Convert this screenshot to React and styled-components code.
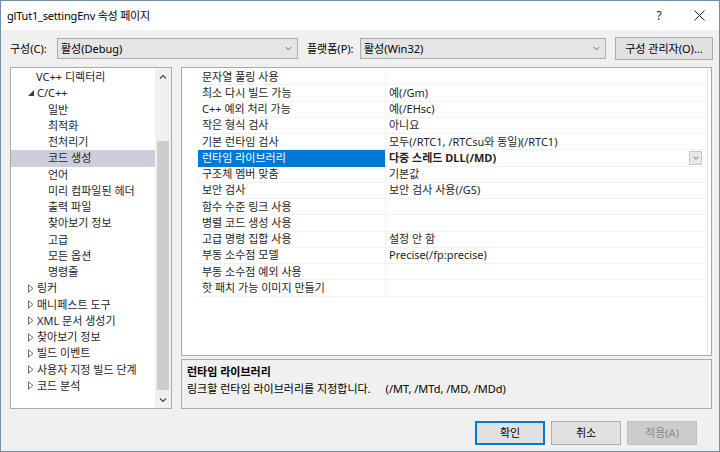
import React from "react";
import styled, { createGlobalStyle, css } from "styled-components";

const Global = createGlobalStyle`
  html, body { margin: 0; padding: 0; background: #ffffff; }
  body { font-family: "Noto Sans", "Noto Sans CJK KR", sans-serif; font-size: 11px; color: #1e1e1e; }
  * { box-sizing: border-box; }
`;

const FONT = `"Noto Sans", "Noto Sans CJK KR", sans-serif`;

const Window = styled.div`
  width: 720px;
  height: 452px;
  border: 1px solid #6f8fb0;
  background: #f0f0f0;
  display: flex;
  flex-direction: column;
  overflow: hidden;
  font-family: ${FONT};
  font-size: 11px;
`;

const TitleBar = styled.div`
  height: 29px;
  flex: none;
  background: #ffffff;
  display: flex;
  align-items: center;
  padding-left: 6px;
`;

const Title = styled.div`
  flex: 1;
  color: #000;
  line-height: 16px;
  font-size: 11px;
  letter-spacing: -0.2px;
`;

const TitleButton = styled.div`
  width: 40px;
  height: 29px;
  display: flex;
  align-items: center;
  justify-content: center;
  color: #222;
  font-size: 12px;
`;

const ConfigBar = styled.div`
  height: 37px;
  flex: none;
  display: flex;
  align-items: center;
  padding: 0 0 0 9px;
`;

const Label = styled.div`
  line-height: 16px;
  color: #000;
  width: ${(p) => p.$w}px;
  flex: none;
`;

const Combo = styled.div`
  width: ${(p) => p.$w}px;
  height: 21px;
  background: #e5e5e5;
  border: 1px solid #acacac;
  display: flex;
  align-items: center;
  padding: 0 4px 0 3px;
  margin-right: ${(p) => p.$mr || 0}px;
  color: #000;
`;

const ComboText = styled.div`
  flex: 1;
  line-height: 16px;
`;

const Button = styled.div`
  width: ${(p) => p.$w || 70}px;
  height: ${(p) => p.$h || 24}px;
  display: flex;
  align-items: center;
  justify-content: center;
  background: #e1e1e1;
  border: 1px solid #adadad;
  color: #000;
  line-height: 16px;
  ${(p) =>
    p.$default &&
    css`
      border-color: #0078d7;
      box-shadow: inset 0 0 0 1px #0078d7;
    `}
  ${(p) =>
    p.$disabled &&
    css`
      background: #cccccc;
      border-color: #bfbfbf;
      color: #8a8a8a;
    `}
`;

const Main = styled.div`
  height: 342px;
  flex: none;
  display: flex;
  padding-left: 9px;
  gap: 9px;
`;

const TreePanel = styled.div`
  width: 162px;
  height: 342px;
  background: #ffffff;
  border: 1px solid #aaaaaa;
  display: flex;
`;

const TreeList = styled.div`
  flex: 1;
  padding-top: 1px;
  overflow: hidden;
`;

const TreeRow = styled.div`
  height: 16.25px;
  display: flex;
  align-items: center;
  padding-left: ${(p) => p.$indent}px;
  background: ${(p) => (p.$selected ? "#cccedb" : "transparent")};
  white-space: nowrap;
  line-height: 16px;
  color: #1e1e1e;
`;

const Arrow = styled.span`
  width: 9px;
  display: inline-flex;
  align-items: center;
  justify-content: flex-start;
  flex: none;
`;

const ScrollBar = styled.div`
  width: 16px;
  flex: none;
  background: #f0f0f0;
  display: flex;
  flex-direction: column;
  align-items: center;
`;

const ScrollArrow = styled.div`
  height: 17px;
  width: 100%;
  display: flex;
  align-items: center;
  justify-content: center;
  flex: none;
`;

const ScrollTrack = styled.div`
  flex: 1;
  width: 100%;
  display: flex;
  flex-direction: column;
  padding: 0 2px;
`;

const ScrollSpace = styled.div`
  flex: ${(p) => p.$f};
`;

const Thumb = styled.div`
  flex: ${(p) => p.$f};
  background: #cdcdcd;
`;

const RightCol = styled.div`
  width: 531px;
  display: flex;
  flex-direction: column;
  gap: 3px;
`;

const Grid = styled.div`
  height: 289px;
  background: #ffffff;
  border: 1px solid #a9a9a9;
  box-shadow: inset -3px 0 0 #ffffff, inset -4px 0 0 #ececec;
  padding-top: 1px;
  overflow: hidden;
`;

const GridRow = styled.div`
  height: 16.25px;
  display: flex;
  padding-left: 16px;
  padding-right: 4px;
`;

const NameCell = styled.div`
  width: 188px;
  flex: none;
  padding-left: 4px;
  display: flex;
  align-items: center;
  line-height: 16px;
  white-space: nowrap;
  border-bottom: 1px solid #f2f2f2;
  border-right: 1px solid #f2f2f2;
  ${(p) =>
    p.$selected &&
    css`
      background: #0078d7;
      color: #ffffff;
      border-bottom-color: #0078d7;
    `}
`;

const ValueCell = styled.div`
  flex: 1;
  padding-left: 3px;
  padding-right: 5px;
  display: flex;
  align-items: center;
  line-height: 16px;
  white-space: nowrap;
  border-bottom: 1px solid #f2f2f2;
  font-weight: ${(p) => (p.$bold ? 700 : 400)};
`;

const ValueText = styled.span`
  flex: 1;
`;

const DropBtn = styled.div`
  width: 13px;
  height: 14px;
  background: #e8e8e8;
  border: 1px solid #c8c8c8;
  display: flex;
  align-items: center;
  justify-content: center;
`;

const Desc = styled.div`
  flex: 1;
  background: #f0f0f0;
  border: 1px solid #a9a9a9;
  padding: 3px 5px;
`;

const DescTitle = styled.div`
  font-weight: 700;
  line-height: 17px;
  color: #000;
`;

const DescText = styled.div`
  line-height: 17px;
  color: #000;
  display: flex;
`;

const DescHint = styled.span`
  margin-left: 15px;
`;

const Footer = styled.div`
  flex: 1;
  display: flex;
  justify-content: flex-end;
  align-items: flex-start;
  padding: 12px 22px 0 0;
  gap: 6px;
`;

const Chevron = ({ up, size = 9, color = "#606060" }) => (
  <svg width={size} height={size} viewBox="0 0 10 10">
    <path
      d={up ? "M2 6.5 L5 3.5 L8 6.5" : "M2 3.5 L5 6.5 L8 3.5"}
      fill="none"
      stroke={color}
      strokeWidth="1.1"
    />
  </svg>
);

const Expanded = () => (
  <svg width="6" height="6" viewBox="0 0 6 6">
    <path d="M6 0 L6 6 L0 6 Z" fill="#3c3c3c" />
  </svg>
);

const Collapsed = () => (
  <svg width="6" height="9" viewBox="0 0 6 9">
    <path d="M0.5 0.8 L5 4.5 L0.5 8.2 Z" fill="none" stroke="#6a6a6a" strokeWidth="1" />
  </svg>
);

const tree = [
  { t: "VC++ 디렉터리", i: 25 },
  { t: "C/C++", i: 17, a: "e" },
  { t: "일반", i: 37 },
  { t: "최적화", i: 37 },
  { t: "전처리기", i: 37 },
  { t: "코드 생성", i: 37, s: true },
  { t: "언어", i: 37 },
  { t: "미리 컴파일된 헤더", i: 37 },
  { t: "출력 파일", i: 37 },
  { t: "찾아보기 정보", i: 37 },
  { t: "고급", i: 37 },
  { t: "모든 옵션", i: 37 },
  { t: "명령줄", i: 37 },
  { t: "링커", i: 17, a: "c" },
  { t: "매니페스트 도구", i: 17, a: "c" },
  { t: "XML 문서 생성기", i: 17, a: "c" },
  { t: "찾아보기 정보", i: 17, a: "c" },
  { t: "빌드 이벤트", i: 17, a: "c" },
  { t: "사용자 지정 빌드 단계", i: 17, a: "c" },
  { t: "코드 분석", i: 17, a: "c" },
];

const props = [
  ["문자열 풀링 사용", ""],
  ["최소 다시 빌드 가능", "예(/Gm)"],
  ["C++ 예외 처리 가능", "예(/EHsc)"],
  ["작은 형식 검사", "아니요"],
  ["기본 런타임 검사", "모두(/RTC1, /RTCsu와 동일)(/RTC1)"],
  ["런타임 라이브러리", "다중 스레드 DLL(/MD)", true],
  ["구조체 멤버 맞춤", "기본값"],
  ["보안 검사", "보안 검사 사용(/GS)"],
  ["함수 수준 링크 사용", ""],
  ["병렬 코드 생성 사용", ""],
  ["고급 명령 집합 사용", "설정 안 함"],
  ["부동 소수점 모델", "Precise(/fp:precise)"],
  ["부동 소수점 예외 사용", ""],
  ["핫 패치 가능 이미지 만들기", ""],
];

export default function App() {
  return (
    <>
      <Global />
      <Window>
        <TitleBar>
          <Title>glTut1_settingEnv 속성 페이지</Title>
          <TitleButton>?</TitleButton>
          <TitleButton>
            <svg width="11" height="11" viewBox="0 0 11 11">
              <path d="M0.5 0.5 L10.5 10.5 M10.5 0.5 L0.5 10.5" stroke="#222" strokeWidth="1" />
            </svg>
          </TitleButton>
        </TitleBar>
        <ConfigBar>
          <Label $w={47}>구성(C):</Label>
          <Combo $w={241} $mr={9}>
            <ComboText>활성(Debug)</ComboText>
            <Chevron />
          </Combo>
          <Label $w={53}>플랫폼(P):</Label>
          <Combo $w={246} $mr={9}>
            <ComboText>활성(Win32)</ComboText>
            <Chevron />
          </Combo>
          <Button $w={98} $h={23}>구성 관리자(O)...</Button>
        </ConfigBar>
        <Main>
          <TreePanel>
            <TreeList>
              {tree.map((r, k) => (
                <TreeRow key={k} $indent={r.i} $selected={r.s}>
                  {r.a && <Arrow>{r.a === "e" ? <Expanded /> : <Collapsed />}</Arrow>}
                  {r.t}
                </TreeRow>
              ))}
            </TreeList>
            <ScrollBar>
              <ScrollArrow>
                <Chevron up size={10} color="#444" />
              </ScrollArrow>
              <ScrollTrack>
                <ScrollSpace $f={58} />
                <Thumb $f={257} />
                <ScrollSpace $f={1} />
              </ScrollTrack>
              <ScrollArrow>
                <Chevron size={10} color="#444" />
              </ScrollArrow>
            </ScrollBar>
          </TreePanel>
          <RightCol>
            <Grid>
              {props.map(([n, v, sel], k) => (
                <GridRow key={k}>
                  <NameCell $selected={sel}>{n}</NameCell>
                  <ValueCell $bold={sel}>
                    <ValueText>{v}</ValueText>
                    {sel && (
                      <DropBtn>
                        <Chevron size={8} color="#555" />
                      </DropBtn>
                    )}
                  </ValueCell>
                </GridRow>
              ))}
            </Grid>
            <Desc>
              <DescTitle>런타임 라이브러리</DescTitle>
              <DescText>
                링크할 런타임 라이브러리를 지정합니다.
                <DescHint>(/MT, /MTd, /MD, /MDd)</DescHint>
              </DescText>
            </Desc>
          </RightCol>
        </Main>
        <Footer>
          <Button $default>확인</Button>
          <Button>취소</Button>
          <Button $disabled>적용(A)</Button>
        </Footer>
      </Window>
    </>
  );
}
